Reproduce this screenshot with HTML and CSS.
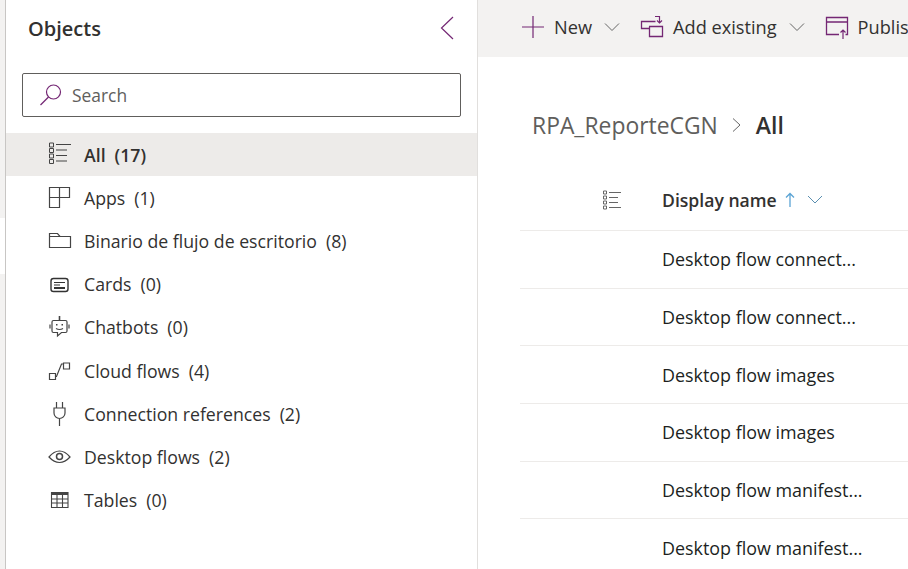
FILE: index.html
```html
<!DOCTYPE html>
<html>
	<head>
		<link rel="stylesheet" href="styles.css">
	</head>
	<body>
		<div id="page">
			<div class="rail">
				<div class="rail-a"></div>
				<div class="rail-gap"></div>
				<div class="rail-b"></div>
			</div>
			<div id="objects">
				<div class="objects-head">
					<h2>Objects</h2>
					<svg class="collapse" width="16" height="24" viewBox="0 0 16 24"><path d="M14 1 2.500 12 14 23" fill="none" stroke="#742774" stroke-width="1.200"/></svg>
				</div>
				<div class="search">
					<svg width="24" height="24" viewBox="0 0 24 24"><circle cx="14.500" cy="9" r="7" fill="none" stroke="#742774" stroke-width="1.200"/><path d="M9.500 14 1.500 22" stroke="#742774" stroke-width="1.300"/></svg>
					<span>Search</span>
				</div>
				<ul class="tree">
					<li class="on">
						<svg class="icon-all" width="24" height="24" viewBox="0 0 24 24"><path d="M8 2.500h15M8 8h11M8 13.500h11M8 19h11" stroke="#444" stroke-width="1.100"/><path d="M1.500 1h4v4h-4zM1.500 6.500h4v4h-4zM1.500 12h4v4h-4zM1.500 17.500h4v4h-4z" fill="none" stroke="#444"/></svg>
						<span class="name">All</span><span>(17)</span>
					</li>
					<li>
						<svg width="24" height="24" viewBox="0 0 24 24"><path d="M1.500 1.500h20v10h-10v10h-10zM11.500 1.500v10M1.500 11.500h10" fill="none" stroke="#444" stroke-width="1.200"/></svg>
						<span class="name">Apps</span><span>(1)</span>
					</li>
					<li>
						<svg width="24" height="24" viewBox="0 0 24 24"><path d="M1.500 4.500h8l2.500 3h10.500v11h-21zM1.500 7.500h10.500" fill="none" stroke="#444" stroke-width="1.200"/></svg>
						<span class="name">Binario de flujo de escritorio</span><span>(8)</span>
					</li>
					<li>
						<svg width="24" height="24" viewBox="0 0 24 24"><rect x="3" y="6.500" width="17" height="13" rx="2.500" fill="none" stroke="#333" stroke-width="1.400"/><path d="M6 10.500h11M6 13h6" stroke="#333" stroke-width="1.200"/><path d="M6 15h11v2H6z" fill="#333"/></svg>
						<span class="name">Cards</span><span>(0)</span>
					</li>
					<li>
						<svg width="24" height="24" viewBox="0 0 24 24"><path d="M11.500 1v4" stroke="#444" stroke-width="1.600"/><path d="M5.500 5.500h12a1.500 1.500 0 0 1 1.500 1.500v9a1.500 1.500 0 0 1-1.500 1.500h-4l-4 3.500v-3.500h-4a1.500 1.500 0 0 1-1.500-1.500v-9a1.500 1.500 0 0 1 1.500-1.500zM2 9.500v4M21 9.500v4M8 13.500q3.500 2 7 0" fill="none" stroke="#444" stroke-width="1.200"/><path d="M8 9h1.500v1.500H8zM13.500 9H15v1.500h-1.500z" fill="#444"/></svg>
						<span class="name">Chatbots</span><span>(0)</span>
					</li>
					<li>
						<svg width="24" height="24" viewBox="0 0 24 24"><path d="M1.500 14.500h6v6h-6zM15.500 4h6v6h-6z" fill="none" stroke="#444" stroke-width="1.200"/><path d="M7.500 17.500h1l5-12.500h2" fill="none" stroke="#444" stroke-width="1.200"/></svg>
						<span class="name">Cloud flows</span><span>(4)</span>
					</li>
					<li>
						<svg width="24" height="24" viewBox="0 0 24 24"><path d="M8.500 0v6M14.500 0v6M6 6h11v5a5.500 5.500 0 0 1-11 0zM11.500 16.500V24" fill="none" stroke="#444" stroke-width="1.200"/></svg>
						<span class="name">Connection references</span><span>(2)</span>
					</li>
					<li>
						<svg width="24" height="24" viewBox="0 0 24 24"><path d="M1 12q5-6 10.500-6T22 12q-5 5.500-10.500 5.500T1 12z" fill="none" stroke="#444" stroke-width="1.200"/><circle cx="11.500" cy="11.500" r="3" fill="none" stroke="#444" stroke-width="1.500"/></svg>
						<span class="name">Desktop flows</span><span>(2)</span>
					</li>
					<li>
						<svg width="24" height="24" viewBox="0 0 24 24"><path d="M3 4h17v3H3z" fill="#444"/><path d="M3.500 4v15.500h16.500V4M3.500 11h16.500M3.500 15h16.500M9 7v12.500M14.500 7v12.500" fill="none" stroke="#444" stroke-width="1.100"/></svg>
						<span class="name">Tables</span><span>(0)</span>
					</li>
				</ul>
			</div>
			<div id="main">
				<div class="cmdbar">
					<div class="cmd">
						<svg width="24" height="24" viewBox="0 0 24 24"><path d="M12 1v22M1 12h22" stroke="#742774" stroke-width="1.200"/></svg>
						<span>New</span>
						<svg class="chev" width="16" height="10" viewBox="0 0 16 10"><path d="M1 1.500 8 8.500 15 1.500" fill="none" stroke="#666"/></svg>
					</div>
					<div class="cmd">
						<svg width="24" height="24" viewBox="0 0 24 24"><path d="M9 13.500H1.500v-7h14M9 11.500h13.500v10H9.500v-10" fill="none" stroke="#742774" stroke-width="1.300"/><path d="M15 1.500h4.500v6M17 5.500l2.500 2.500 2.500-2.500" fill="none" stroke="#742774" stroke-width="1.200"/></svg>
						<span>Add existing</span>
						<svg class="chev" width="16" height="10" viewBox="0 0 16 10"><path d="M1 1.500 8 8.500 15 1.500" fill="none" stroke="#666"/></svg>
					</div>
					<div class="cmd">
						<svg width="24" height="24" viewBox="0 0 24 24"><path d="M14 19.500H1.500v-17h21v17h-2M1.500 7h21" fill="none" stroke="#742774" stroke-width="1.300"/><path d="M18 24v-9M15.500 17.500l2.500-2.500 2.500 2.500" fill="none" stroke="#742774" stroke-width="1.200"/></svg>
						<span>Publish all customizations</span>
					</div>
				</div>
				<div class="crumbs">
					<span class="crumb">RPA_ReporteCGN</span>
					<svg width="12" height="16" viewBox="0 0 12 16"><path d="M2 1.500 9 8 2 14.500" fill="none" stroke="#666"/></svg>
					<span class="here">All</span>
				</div>
				<div class="grid">
					<div class="grid-head">
						<svg class="cols" width="20" height="20" viewBox="0 0 20 20"><path d="M7 2.500h12M7 7.500h9M7 12.500h9M7 17.500h12" stroke="#666" stroke-width="1.100"/><path d="M1.500 1h3v3h-3zM1.500 6h3v3h-3zM1.500 11h3v3h-3zM1.500 16h3v3h-3z" fill="none" stroke="#666"/></svg>
						<span class="col-name">Display name</span>
						<svg width="10" height="16" viewBox="0 0 10 16"><path d="M5 15V1.500M1 5.500l4-4 4 4" fill="none" stroke="#5ba4d4" stroke-width="1.300"/></svg>
						<svg class="col-chev" width="16" height="10" viewBox="0 0 16 10"><path d="M1 1 8 8 15 1" fill="none" stroke="#5a8fb0"/></svg>
					</div>
					<div class="row"><span>Desktop flow connect...</span></div>
					<div class="row"><span>Desktop flow connect...</span></div>
					<div class="row"><span>Desktop flow images</span></div>
					<div class="row"><span>Desktop flow images</span></div>
					<div class="row"><span>Desktop flow manifest...</span></div>
					<div class="row"><span>Desktop flow manifest...</span></div>
				</div>
			</div>
		</div>
	</body>
</html>
```

FILE: styles.css
```css
html, body {
	margin: 0;
	padding: 0;
	height: 100%;
	overflow: hidden;
	background: #fff;
}

#page {
	display: flex;
	height: 569px;
	font-family: "Open Sans", "Noto Sans", sans-serif;
	color: #323130;
}

.rail {
	width: 5px;
	display: flex;
	flex-direction: column;
	border-right: 1px solid #c8c6c4;
}

.rail-a {
	height: 218px;
	background: #f3f2f1;
}

.rail-gap {
	height: 56px;
	background: #fff;
}

.rail-b {
	flex: 1;
	background: #f3f2f1;
}

#objects {
	width: 471px;
	flex: none;
	border-right: 1px solid #e1dfdd;
}

.objects-head {
	display: flex;
	justify-content: space-between;
	align-items: center;
	height: 56px;
	padding: 0 22px;
}

.objects-head h2 {
	margin: 0;
	font-size: 20px;
	font-weight: 600;
}

.search {
	display: flex;
	align-items: center;
	gap: 9px;
	height: 42px;
	margin: 17px 16px 16px;
	padding-left: 16px;
	border: 1px solid #605e5c;
	border-radius: 2px;
	font-size: 17.400px;
	color: #605e5c;
}

.tree {
	list-style: none;
	margin: 0;
	padding: 0;
}

.tree li {
	display: flex;
	align-items: center;
	gap: 9px;
	height: 43.200px;
	padding-left: 42px;
	font-size: 17.700px;
}

.tree li svg {
	margin-right: 3px;
	flex: none;
}

.tree li svg.icon-all {
	margin-bottom: 2px;
}

.tree li.on {
	background: #edebe9;
	font-weight: 600;
}

#main {
	flex: 1;
	min-width: 0;
}

.cmdbar {
	display: flex;
	align-items: center;
	gap: 20px;
	box-sizing: border-box;
	height: 57px;
	padding: 0 0 3px 43px;
	background: #f3f2f1;
	font-size: 18.200px;
	white-space: nowrap;
	overflow: hidden;
}

.cmd {
	display: flex;
	align-items: center;
	gap: 9px;
}

.chev {
	margin-left: 3px;
}

.crumbs {
	display: flex;
	align-items: center;
	gap: 13px;
	height: 50px;
	margin: 43px 0 0 54px;
}

.crumb {
	font-size: 22.900px;
	color: #605e5c;
}

.here {
	font-size: 23px;
	font-weight: 600;
}

.grid {
	margin: 0 0 0 42px;
}

.grid-head {
	display: flex;
	align-items: center;
	height: 53px;
	margin-top: 23px;
	padding-bottom: 4px;
	border-bottom: 1px solid #edebe9;
	font-size: 17.600px;
}

.cols {
	margin-left: 82px;
	margin-right: 40px;
}

.col-name {
	font-weight: 600;
	margin-right: 8px;
}

.col-chev {
	margin-left: 12px;
}

.row {
	display: flex;
	align-items: center;
	height: 56.700px;
	padding-left: 142px;
	border-bottom: 1px solid #edebe9;
	font-size: 17.900px;
	color: #201f1e;
}
```
